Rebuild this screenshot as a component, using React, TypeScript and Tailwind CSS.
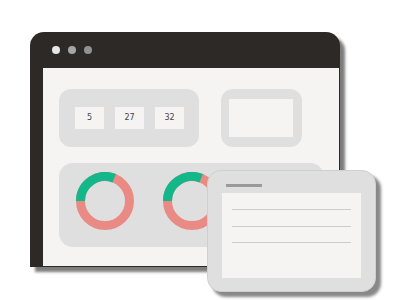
function Donut() {
  return (
    <svg width="58" height="58" viewBox="0 0 58 58" className="shrink-0">
      <circle cx="29" cy="29" r="24.5" fill="none" stroke="#ea8a85" strokeWidth="9" />
      <path d="M4.5 29 A24.5 24.5 0 0 1 38.18 6.29" fill="none" stroke="#14b78a" strokeWidth="9" />
    </svg>
  );
}

export default function App() {
  const stats = [5, 27, 32];

  return (
    <div className="relative w-[400px] h-[300px] bg-white overflow-hidden font-['DejaVu_Sans',sans-serif]">
      {/* browser window */}
      <div className="ml-[30px] mt-[32px] w-[310px] h-[235px] flex flex-col bg-[#2c2926] rounded-tl-[14px] rounded-tr-[14px] shadow-[5px_5px_3px_#7c7c7c]">
        <div className="h-[36px] shrink-0 flex items-center gap-2 pl-[22px]">
          <span className="w-2 h-2 rounded-full bg-[#e6e6e6]" />
          <span className="w-2 h-2 rounded-full bg-[#a6a6a6]" />
          <span className="w-2 h-2 rounded-full bg-[#919191]" />
        </div>
        <div className="flex-1 ml-[13px] mr-px mb-px bg-[#f5f4f3] pt-[21px] pl-[16px] flex flex-col gap-[16px]">
          <div className="flex gap-[22px]">
            <div className="w-[140px] h-[58px] rounded-[12px] bg-[#e0dfe0] flex items-center pl-[16px] gap-[11px]">
              {stats.map((n) => (
                <div key={n} className="w-[29px] h-[22px] bg-[#f5f4f3] flex items-center justify-center text-[8px] text-[#444]">
                  {n}
                </div>
              ))}
            </div>
            <div className="w-[81px] h-[58px] rounded-[12px] bg-[#e0dfe0] pt-[10px] pb-[10px] pl-[8px] pr-[9px]">
              <div className="w-full h-full bg-[#f5f4f3]" />
            </div>
          </div>
          <div className="w-[265px] h-[84px] rounded-[14px] bg-[#e0dfe0] flex gap-[29px] pl-[17px] pt-[9px]">
            <Donut />
            <Donut />
          </div>
        </div>
      </div>

      {/* floating card */}
      <div className="absolute left-[207px] top-[170px] w-[169px] h-[122px] rounded-[14px] bg-[#e0dfe0] border border-[#cfcfcf] shadow-[5px_5px_3px_#888888] flex flex-col px-[14px] pb-[13px]">
        <div className="ml-[4px] mt-[13px] w-[36px] h-[3px] bg-[#9a9a9a]" />
        <div className="mt-[6px] flex-1 bg-[#f5f4f3] px-[10px] pt-[16px] flex flex-col gap-[15.5px]">
          <div className="h-px bg-[#cccccc]" />
          <div className="h-px bg-[#cccccc]" />
          <div className="h-px bg-[#cccccc]" />
        </div>
      </div>
    </div>
  );
}
